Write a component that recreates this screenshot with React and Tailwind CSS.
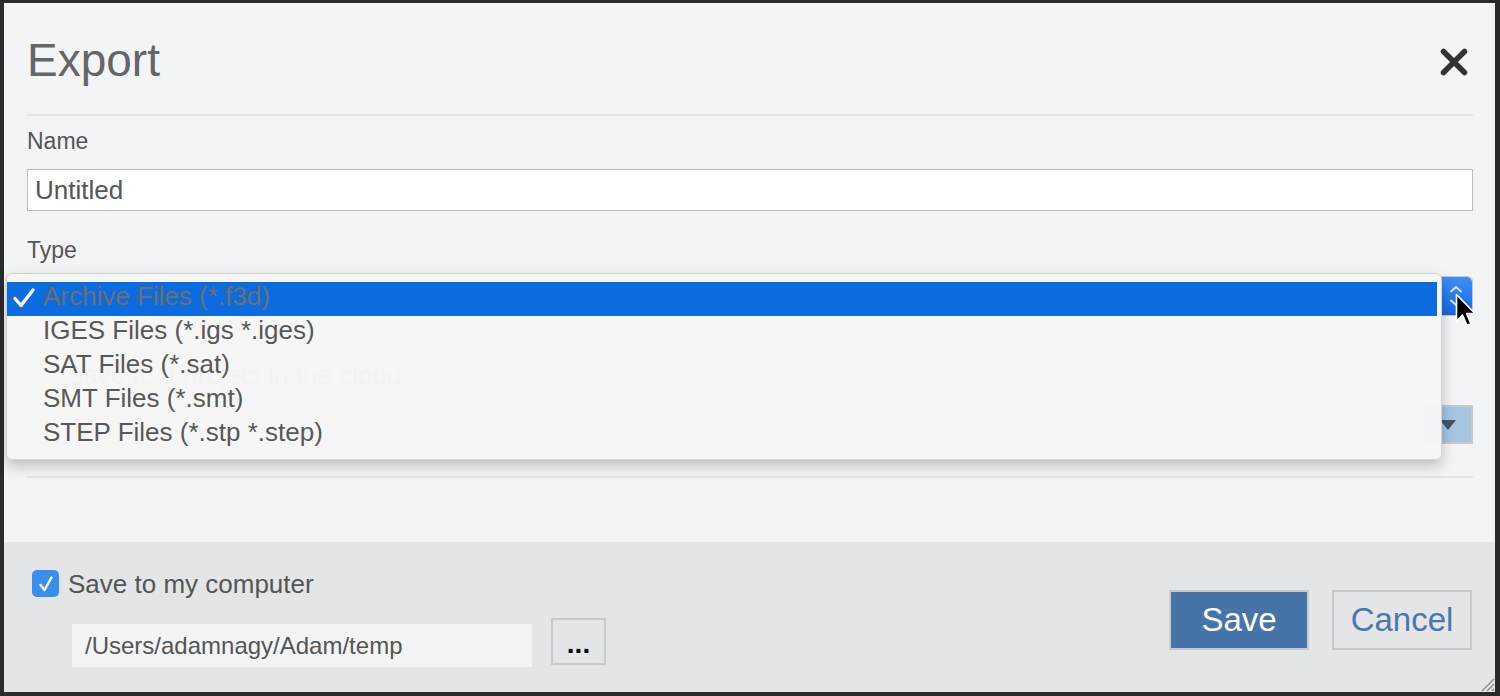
import React from 'react';

const fileTypes = [
  'Archive Files (*.f3d)',
  'IGES Files (*.igs *.iges)',
  'SAT Files (*.sat)',
  'SMT Files (*.smt)',
  'STEP Files (*.stp *.step)',
];

function CloseIcon() {
  return (
    <svg width="28" height="28" viewBox="0 0 28 28">
      <path d="M3.5 3.5 L24.5 24.5 M24.5 3.5 L3.5 24.5" stroke="#333" strokeWidth="5.5" strokeLinecap="round" />
    </svg>
  );
}

function Cursor() {
  return (
    <svg width="24" height="38" viewBox="0 0 24 38" className="absolute left-[1451px] top-[290px]">
      <path d="M1.5 1.5 L1.5 28 L7.5 22 L12 32.5 L16 30.8 L11.5 20.5 L20 20.5 Z" fill="#000" stroke="#fff" strokeWidth="1.6" strokeLinejoin="round" />
    </svg>
  );
}

function TypeSelect() {
  // the open list covers this control, only its stepper button shows
  return (
    <div className="mt-[14px] flex h-[40px] items-stretch rounded-[5px] border border-[#c9c9c9] bg-white">
      <div className="flex-1" />
      <div className="flex w-[32px] items-center justify-center rounded-r-[5px] bg-linear-to-b from-[#3d8ff6] to-[#1566e3]">
        <svg width="14" height="22" viewBox="0 0 14 22">
          <path d="M1.5 7 L7 2 L12.5 7 M1.5 15 L7 20 L12.5 15" stroke="#dbe8fb" strokeWidth="1.8" fill="none" />
        </svg>
      </div>
    </div>
  );
}

function Popup() {
  return (
    <div className="absolute left-[2px] top-[270px] h-[187px] w-[1436px] rounded-[6px] border border-[#d2d2d2] bg-[#f6f6f6]/[0.97] pt-[8px] shadow-[0_6px_14px_rgba(0,0,0,0.22)]">
      {fileTypes.map((t, i) => (
        <div
          key={t}
          className={`mr-[4px] flex h-[34px] items-start ${i === 0 ? 'bg-[#0a6cde] text-[#6e6e6e]' : 'text-[#585858]'}`}
        >
          <div className="w-[36px] pl-[6px] pt-[5px]">
            {i === 0 && (
              <svg width="22" height="22" viewBox="0 0 22 22">
                <path d="M2 11.5 L8 18.5 L20 3" stroke="#fff" strokeWidth="3.4" fill="none" strokeLinecap="round" strokeLinejoin="round" />
              </svg>
            )}
          </div>
          <span className="text-[26px] leading-[29px]">{t}</span>
        </div>
      ))}
    </div>
  );
}

export default function App() {
  return (
    <div className="relative h-[696px] w-[1500px] border-b-[4px] border-l-[4px] border-r-[5px] border-t-[3px] border-[#2b2b2b] font-['Liberation_Sans',Arial,sans-serif]">
      <div className="flex h-full flex-col">
        <div className="relative flex-1 bg-[#f3f4f6] pl-[23px] pr-[22px]">
          <div className="flex h-[111px] items-start justify-between pt-[34px]">
            <h1 className="text-[46px] leading-none text-[#666]">Export</h1>
            <div className="mr-[5px] mt-[11px]">
              <CloseIcon />
            </div>
          </div>
          <div className="h-[2px] bg-[#e3e4e6]" />

          <div className="mt-[14px] text-[23px] leading-none text-[#555]">Name</div>
          <div className="mt-[16px] flex h-[42px] items-center border border-[#bdbdbd] bg-white pl-[7px]">
            <span className="text-[26px] leading-none text-[#555]">Untitled</span>
          </div>

          <div className="mt-[28px] text-[23px] leading-none text-[#555]">Type</div>
          <TypeSelect />

          <div className="mt-[46px] flex items-center gap-[8px] pl-[15px]">
            <span className="h-[16px] w-[16px] rounded-full border border-[#aaa] bg-white" />
            <span className="text-[26px] leading-none text-[#999]">Save to a project in the cloud</span>
          </div>
          <div className="mt-[17px] flex h-[39px] items-stretch border border-[#d6d6d6] bg-[#f3f4f6]">
            <div className="flex-1" />
            <div className="-m-px flex w-[50px] items-center justify-center border-2 border-[#c8c8c8] bg-[#a5c5e1]">
              <svg width="16" height="10" viewBox="0 0 16 10">
                <path d="M0 0 L16 0 L8 10 Z" fill="#425566" />
              </svg>
            </div>
          </div>
          <div className="mt-[32px] h-[2px] bg-[#e3e4e6]" />

          <Popup />
          <Cursor />
        </div>

        <div className="flex h-[150px] justify-between bg-[#e4e5e7] pl-[28px] pr-[23px]">
          <div className="pt-[28px]">
            <label className="flex items-center gap-[9px]">
              <span className="flex h-[27px] w-[27px] items-center justify-center rounded-[5px] bg-[#3a8ef0]">
                <svg width="16" height="18" viewBox="0 0 16 18">
                  <path d="M2.5 10 L6.5 15 L13.5 2.5" stroke="#fff" strokeWidth="2.4" fill="none" strokeLinecap="round" strokeLinejoin="round" />
                </svg>
              </span>
              <span className="text-[26px] leading-none text-[#555]">Save to my computer</span>
            </label>
            <div className="ml-[40px] mt-[21px] flex items-start gap-[19px]">
              <div className="mt-[6px] flex h-[43px] w-[460px] items-center bg-[#f3f4f6] pl-[13px]">
                <span className="text-[24px] leading-none text-[#555]">/Users/adamnagy/Adam/temp</span>
              </div>
              <button className="flex h-[47px] w-[55px] items-end justify-center border-2 border-[#c9cac9] pb-[5px] text-[28px] font-bold leading-none text-black">
                ...
              </button>
            </div>
          </div>
          <div className="flex items-start gap-[23px] pt-[48px]">
            <button className="h-[60px] w-[140px] border-2 border-[#c9cbc9] bg-[#4674a9] text-[33px] text-white">Save</button>
            <button className="h-[60px] w-[140px] border-2 border-[#c9cac8] text-[33px] text-[#4a77ad]">Cancel</button>
          </div>
        </div>
      </div>
      <svg width="16" height="16" viewBox="0 0 16 16" className="absolute bottom-0 right-0">
        <path d="M15 3 L3 15 M15 8 L8 15 M15 13 L13 15" stroke="#8a8a8a" strokeWidth="1.3" />
      </svg>
    </div>
  );
}
